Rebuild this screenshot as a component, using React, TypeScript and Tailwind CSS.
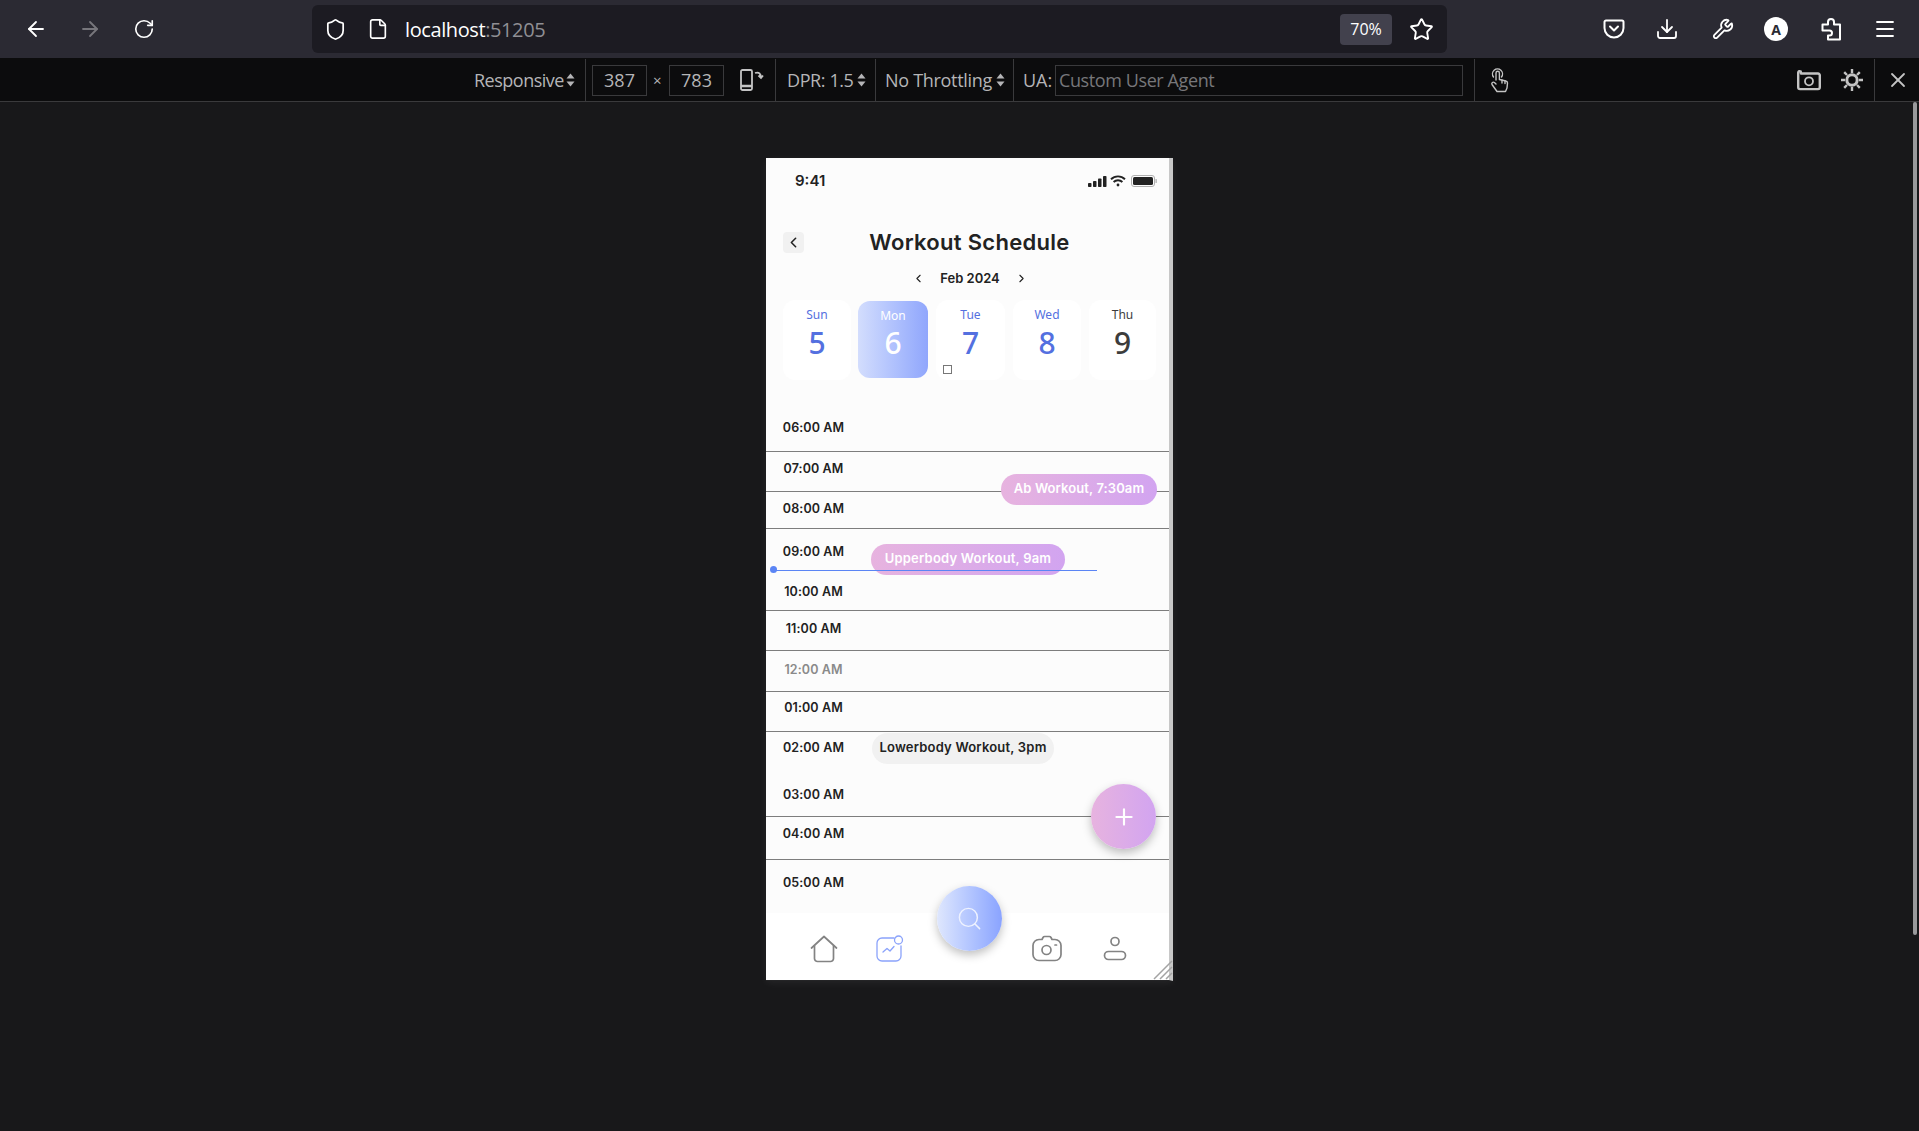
import React from "react";
import { ArrowLeft, ArrowRight, RotateCw, Shield, File, Star, Download, Wrench, Menu, X, ChevronLeft, ChevronRight, Plus, Search } from "lucide-react";

const rows = [
  { t: "06:00 AM", c: "h-[52px] pt-[20px] border-b" },
  { t: "07:00 AM", c: "h-[40px] pt-[9px] border-b" },
  { t: "08:00 AM", c: "h-[37px] pt-[9px] border-b" },
  { t: "09:00 AM", c: "h-[40px] pt-[15px]" },
  { t: "10:00 AM", c: "h-[42px] pt-[15px] border-b" },
  { t: "11:00 AM", c: "h-[40px] pt-[10px] border-b" },
  { t: "12:00 AM", c: "h-[41px] pt-[11px] border-b text-[#8a8a8a]" },
  { t: "01:00 AM", c: "h-[40px] pt-[8px] border-b" },
  { t: "02:00 AM", c: "h-[45px] pt-[8px]" },
  { t: "03:00 AM", c: "h-[40px] pt-[10px] border-b" },
  { t: "04:00 AM", c: "h-[43px] pt-[9px] border-b" },
  { t: "05:00 AM", c: "h-[53px] pt-[15px]" },
];

const days = [
  { d: "Sun", n: "5", c: "w-[68px] h-[80px] bg-white text-[#5470e0]" },
  { d: "Mon", n: "6", c: "w-[70px] h-[77px] mt-px -ml-px bg-gradient-to-r from-[#d3ddfd] to-[#90a6fc] text-white" },
  { d: "Tue", n: "7", c: "w-[69px] h-[80px] bg-white text-[#5470e0]" },
  { d: "Wed", n: "8", c: "w-[68px] h-[80px] bg-white text-[#5470e0]" },
  { d: "Thu", n: "9", c: "w-[67px] h-[80px] bg-white text-[#3c3c3c]" },
];

function Spinner() {
  return (
    <svg width="9" height="14" viewBox="0 0 9 14" fill="#b5b5b7" className="shrink-0">
      <path d="M4.500 0.500L8.500 5.500H0.500z" />
      <path d="M4.500 13.500L8.500 8.500H0.500z" />
    </svg>
  );
}
function Pocket() {
  return (
    <svg width="22" height="20" viewBox="0 0 22 20" fill="none" stroke="currentColor" strokeWidth="2" strokeLinecap="round" strokeLinejoin="round">
      <path d="M3 1.500h16a1.500 1.500 0 0 1 1.500 1.500v6a9.500 9.500 0 0 1-19 0V3A1.500 1.500 0 0 1 3 1.500z" />
      <path d="M7 7.500l4 4 4-4" />
    </svg>
  );
}
function Puzzle() {
  return (
    <svg width="21" height="23" viewBox="0 0 21 23" fill="none" stroke="currentColor" strokeWidth="2" strokeLinejoin="round">
      <path d="M1.500 6.500h5.500V4a3 3 0 0 1 6 0v2.500h6v15h-12v-4H8.500a2.500 2.500 0 0 0 0-5H1.500z" />
    </svg>
  );
}
function Gear() {
  return (
    <svg width="24" height="24" viewBox="0 0 24 24" fill="none" stroke="#c4c4c4" strokeWidth="2.400">
      <circle cx="12" cy="12" r="5.200" strokeWidth="3" />
      <path d="M12 1v4M12 19v4M1 12h4M19 12h4M4.200 4.200l2.800 2.800M17 17l2.800 2.800M4.200 19.800L7 17M17 7l2.800-2.800" />
    </svg>
  );
}
function Shot() {
  return (
    <svg width="24" height="22" viewBox="0 0 24 22" fill="none" stroke="#c4c4c4" strokeWidth="2.400" strokeLinejoin="round">
      <path d="M4 4.500h17a1.800 1.800 0 0 1 1.800 1.800v12a1.800 1.800 0 0 1-1.800 1.800H3a1.800 1.800 0 0 1-1.800-1.800V3.500a1.500 1.500 0 0 1 2.500-1z" />
      <circle cx="12" cy="12.300" r="4" strokeWidth="1.800" />
    </svg>
  );
}
function Rotate() {
  return (
    <svg width="24" height="22" viewBox="0 0 24 22" fill="none" stroke="#c4c4c4" strokeWidth="1.800">
      <rect x="1" y="1" width="11" height="20" rx="1.500" />
      <path d="M1 17h11" strokeWidth="2.500" />
      <path d="M15 4c4-1.500 6 1 6 4.500M18.500 6.500l2.500 2.500 2-2.500" />
    </svg>
  );
}
function Touch() {
  return (
    <svg width="20" height="26" viewBox="0 0 20 26" fill="none" stroke="#c4c4c4" strokeWidth="1.400" strokeLinecap="round" strokeLinejoin="round">
      <path d="M3.500 10a5 5 0 1 1 8 0" />
      <path d="M6 13V6a1.700 1.700 0 0 1 3.400 0v6.500l6.500 1.500a2 2 0 0 1 1.600 2l-.5 5-1.500 3.500H7l-5-7a1.600 1.600 0 0 1 2.400-2l1.600 1.500" />
      <path d="M12 13v3M15 14v2.500" />
    </svg>
  );
}
function Home() {
  return (
    <svg width="28" height="28" viewBox="0 0 28 28" fill="none" stroke="#838383" strokeWidth="1.700" strokeLinecap="round" strokeLinejoin="round">
      <path d="M1.500 13L14 1.500 26.500 13" />
      <path d="M4.500 11v12.500a3 3 0 0 0 3 3h13a3 3 0 0 0 3-3V11" />
    </svg>
  );
}
function Stats() {
  return (
    <svg width="29" height="29" viewBox="0 0 29 29" fill="none" stroke="#8ba3fb" strokeWidth="1.300" strokeLinecap="round" strokeLinejoin="round">
      <path d="M19 3H7a5 5 0 0 0-5 5v13a5 5 0 0 0 5 5h14a5 5 0 0 0 5-5V11" />
      <circle cx="23.500" cy="5" r="4" />
      <path d="M8 17l4-3.500 3 2.500 4-4.500" />
    </svg>
  );
}
function Profile() {
  return (
    <svg width="24" height="25" viewBox="0 0 24 25" fill="none" stroke="#838383" strokeWidth="1.700">
      <circle cx="12" cy="5.500" r="4" />
      <rect x="1.500" y="15.500" width="21" height="8" rx="4" />
    </svg>
  );
}
function CamIcon() {
  return (
    <svg width="30" height="27" viewBox="0 0 30 27" fill="none" stroke="#838383" strokeWidth="1.700" strokeLinejoin="round">
      <path d="M10 4.500l1-2a2 2 0 0 1 1.800-1h4.400a2 2 0 0 1 1.800 1l1 2h3a6 6 0 0 1 6 6v9a6 6 0 0 1-6 6H7a6 6 0 0 1-6-6v-9a6 6 0 0 1 6-6z" />
      <circle cx="14.500" cy="15" r="4.500" />
      <path d="M23 10h1.500" strokeLinecap="round" />
    </svg>
  );
}
function Signal() {
  return (
    <svg width="19" height="12" viewBox="0 0 19 12" fill="#222">
      <rect x="0" y="8" width="3.500" height="4" rx="0.800" />
      <rect x="5" y="6" width="3.500" height="6" rx="0.800" />
      <rect x="10" y="3.500" width="3.500" height="8.500" rx="0.800" />
      <rect x="15" y="1" width="3.500" height="11" rx="0.800" />
    </svg>
  );
}
function Wifi() {
  return (
    <svg width="16" height="12" viewBox="0 0 16 12" fill="none" stroke="#222" strokeWidth="1.900">
      <path d="M1 4.200a10 10 0 0 1 14 0M3.600 7a6.300 6.300 0 0 1 8.800 0" />
      <circle cx="8" cy="10" r="1.400" fill="#222" stroke="none" />
    </svg>
  );
}
function Battery() {
  return (
    <svg width="26" height="12" viewBox="0 0 26 12" fill="none">
      <rect x="0.500" y="0.500" width="23" height="11" rx="2.500" stroke="#b0b0b0" />
      <rect x="2" y="2" width="20" height="8" rx="1.500" fill="#222" />
      <rect x="24.500" y="4" width="1.300" height="4" rx="0.600" fill="#b0b0b0" />
    </svg>
  );
}
function Grip() {
  return (
    <svg width="20" height="20" viewBox="0 0 20 20" stroke="#a3a3a3" strokeWidth="1.500">
      <path d="M1 19L19 1M7 19L19 7M13 19l6-6" />
    </svg>
  );
}

export default function App() {
  return (
    <div className="relative h-[1131px] w-[1919px] overflow-hidden bg-[#18181a] font-['Open_Sans','Noto_Sans',sans-serif]">
      {/* browser toolbar */}
      <div className="flex h-[58px] items-center bg-[#2b2a33] text-white">
        <ArrowLeft size={24} strokeWidth={1.8} className="ml-[24px]" />
        <ArrowRight size={24} strokeWidth={1.8} className="ml-[30px] text-[#77767c]" />
        <RotateCw size={22} strokeWidth={1.8} className="ml-[31px]" />
        <div className="ml-[157px] flex h-[48px] w-[1135px] items-center rounded-[6px] bg-[#1c1b22]">
          <Shield size={23} strokeWidth={1.8} className="ml-[12px]" />
          <File size={22} strokeWidth={1.8} className="ml-[20px]" />
          <div className="ml-[16px] pt-[1px] text-[20px] tracking-[-0.4px]">
            localhost<span className="text-[#8f8f94]">:51205</span>
          </div>
          <div className="ml-auto flex h-[31px] w-[52px] items-center justify-center rounded-[4px] bg-[#42414d] text-[16px]">70%</div>
          <Star size={25} strokeWidth={1.8} className="ml-[17px] mr-[13px]" />
        </div>
        <div className="ml-[156px] text-white"><Pocket /></div>
        <Download size={24} strokeWidth={1.8} className="ml-[30px]" />
        <Wrench size={22} strokeWidth={2} className="ml-[33px]" />
        <div className="ml-[30px] flex h-[24px] w-[24px] items-center justify-center rounded-full bg-white text-[14px] font-bold text-[#2b2a33]">A</div>
        <div className="ml-[33px]"><Puzzle /></div>
        <Menu size={24} strokeWidth={1.8} className="ml-[31px]" />
      </div>
      {/* devtools bar */}
      <div className="flex h-[44px] items-center border-b border-[#3a3a3c] bg-[#0c0c0d] pt-px text-[18px] text-[#b5b5b7]">
        <div className="ml-[474px] w-[88px] whitespace-nowrap tracking-[-0.5px]">Responsive</div>
        <div className="ml-[4px]"><Spinner /></div>
        <div className="ml-[10px] h-full border-l border-[#3a3a3c]" />
        <div className="ml-[6px] flex h-[31px] w-[55px] items-center justify-center border border-[#3a3a3c]">387</div>
        <div className="mx-[6px] w-[10px] text-[15px]">×</div>
        <div className="flex h-[31px] w-[55px] items-center justify-center border border-[#3a3a3c]">783</div>
        <div className="ml-[16px]"><Rotate /></div>
        <div className="ml-[11px] h-full border-l border-[#3a3a3c]" />
        <div className="ml-[11px] w-[65px] whitespace-nowrap tracking-[-0.4px]">DPR: 1.5</div>
        <div className="ml-[5px]"><Spinner /></div>
        <div className="ml-[9px] h-full border-l border-[#3a3a3c]" />
        <div className="ml-[9px] w-[108px] whitespace-nowrap tracking-[-0.3px]">No Throttling</div>
        <div className="ml-[3px]"><Spinner /></div>
        <div className="ml-[8px] h-full border-l border-[#3a3a3c]" />
        <div className="ml-[9px] w-[32px]">UA:</div>
        <div className="flex h-[31px] w-[408px] items-center border border-[#3a3a3c] pl-[3px] tracking-[-0.4px] text-[#77777a]">Custom User Agent</div>
        <div className="ml-[11px] h-full border-l border-[#3a3a3c]" />
        <div className="ml-[15px]"><Touch /></div>
        <div className="ml-[287px]"><Shot /></div>
        <div className="ml-[19px]"><Gear /></div>
        <div className="ml-[10px] h-full border-l border-[#3a3a3c]" />
        <X size={24} strokeWidth={1.800} color="#c4c4c4" className="ml-[11px]" />
      </div>
      {/* page scrollbar */}
      <div className="absolute right-[2px] top-[102px] h-[833px] w-[4px] rounded-full bg-[#9a9a9c]" />

      {/* viewport */}
      <div className="flex justify-center pl-[20px] pt-[56px]">
        <div className="relative flex h-[823px] w-[407px] border-r-4 border-b border-[#c8c8c8] border-b-[#242426] shadow-[0_2px_8px_rgba(255,255,255,0.06)]">
          <div className="relative flex w-full flex-col bg-[#fcfcfc] font-['Inter',sans-serif] text-[#222]">
            <div className="flex h-[44px] items-center pl-[29px] pr-[12px] pt-[2px]">
              <div className="text-[15px] font-semibold">9:41</div>
              <div className="ml-auto flex items-center gap-[5px]"><div className="-mr-[2px]"><Signal /></div><Wifi /><Battery /></div>
            </div>

            <div className="mt-[30px] flex items-center pl-[17px] pr-[13px]">
              <div className="flex h-[21px] w-[21px] items-center justify-center rounded-[4px] bg-[#f1f1f1]">
                <ChevronLeft size={17} strokeWidth={2.200} />
              </div>
              <div className="flex-1 whitespace-nowrap text-center text-[22px] font-semibold tracking-[0.3px] leading-[21px]">Workout Schedule</div>
              <div className="w-[21px]" />
            </div>

            <div className="mt-[17px] flex h-[16px] items-center justify-center gap-[15px] pl-[5px]">
              <ChevronLeft size={13} strokeWidth={2} />
              <div className="w-[60px] whitespace-nowrap text-center text-[13px] font-semibold leading-[16px]">Feb 2024</div>
              <ChevronRight size={13} strokeWidth={2} />
            </div>

            <div className="mt-[14px] flex items-start gap-[8px] pl-[17px] font-['Noto_Sans',sans-serif]">
              {days.map((x) => (
                <div key={x.d} className={`relative flex flex-col items-center rounded-[12px] pt-[5px] ${x.c}`}>
                  <div className="text-[12px] leading-[20px]">{x.d}</div>
                  <div className={`text-[30px] font-medium leading-[36px] ${x.d === "Mon" ? "-mt-px" : ""}`}>{x.n}</div>
                  {x.d === "Tue" && <div className="absolute left-[7px] top-[65px] h-[9px] w-[9px] border border-[#777] bg-white" />}
                </div>
              ))}
            </div>

            <div className="mt-[20px] flex flex-col">
              {rows.map((r) => (
                <div key={r.t} className={`border-[#7d7d7d] ${r.c}`}>
                  <div className="flex w-[95px] justify-center whitespace-nowrap text-[12.500px] font-semibold leading-[16px] tracking-[0.1px]">{r.t}</div>
                </div>
              ))}
            </div>

            <div className="flex flex-1 items-start bg-white pt-[22px]">
              <div className="ml-[44px]"><Home /></div>
              <div className="ml-[37px]"><Stats /></div>
              <div className="ml-[128px]"><CamIcon /></div>
              <div className="ml-[41px] mt-[1px]"><Profile /></div>
            </div>

            {/* overlays */}
            <div className="absolute left-[235px] top-[316px] flex h-[31px] w-[156px] items-center justify-center whitespace-nowrap rounded-full bg-gradient-to-r from-[#e7b3df] to-[#d2a4f0] pb-[2px] text-[13px] font-semibold tracking-[0.1px] text-white">Ab Workout, 7:30am</div>
            <div className="absolute left-[105px] top-[386px] flex h-[31px] w-[194px] items-center justify-center whitespace-nowrap rounded-full bg-gradient-to-r from-[#e7b3df] to-[#d2a4f0] pb-[2px] text-[13px] font-semibold tracking-[0.2px] text-white">Upperbody Workout, 9am</div>
            <div className="absolute left-[106px] top-[575px] flex h-[31px] w-[182px] items-center justify-center whitespace-nowrap rounded-full bg-[#f1f1f1] pb-[2px] text-[13px] font-semibold tracking-[0.2px] text-[#222]">Lowerbody Workout, 3pm</div>
            <div className="absolute left-[10px] top-[412px] h-px w-[321px] bg-[#5b85f5]" />
            <div className="absolute left-[4px] top-[408px] h-[7px] w-[7px] rounded-full bg-[#5b85f5]" />
            <div className="absolute left-[325px] top-[626px] flex h-[65px] w-[65px] items-center justify-center rounded-full bg-gradient-to-r from-[#e7b3df] to-[#d2a4f0] shadow-[0_4px_10px_rgba(0,0,0,0.25)]">
              <Plus size={26} strokeWidth={2} color="#fff" />
            </div>
            <div className="absolute left-[171px] top-[728px] flex h-[65px] w-[65px] items-center justify-center rounded-full bg-gradient-to-r from-[#dfe7fd] to-[#8aa3ff] shadow-[0_4px_10px_rgba(0,0,0,0.25)]">
              <Search size={27} strokeWidth={1.300} color="#eef2ff" />
            </div>
            <div className="absolute bottom-0 right-[-4px]"><Grip /></div>
          </div>
        </div>
      </div>
    </div>
  );
}
